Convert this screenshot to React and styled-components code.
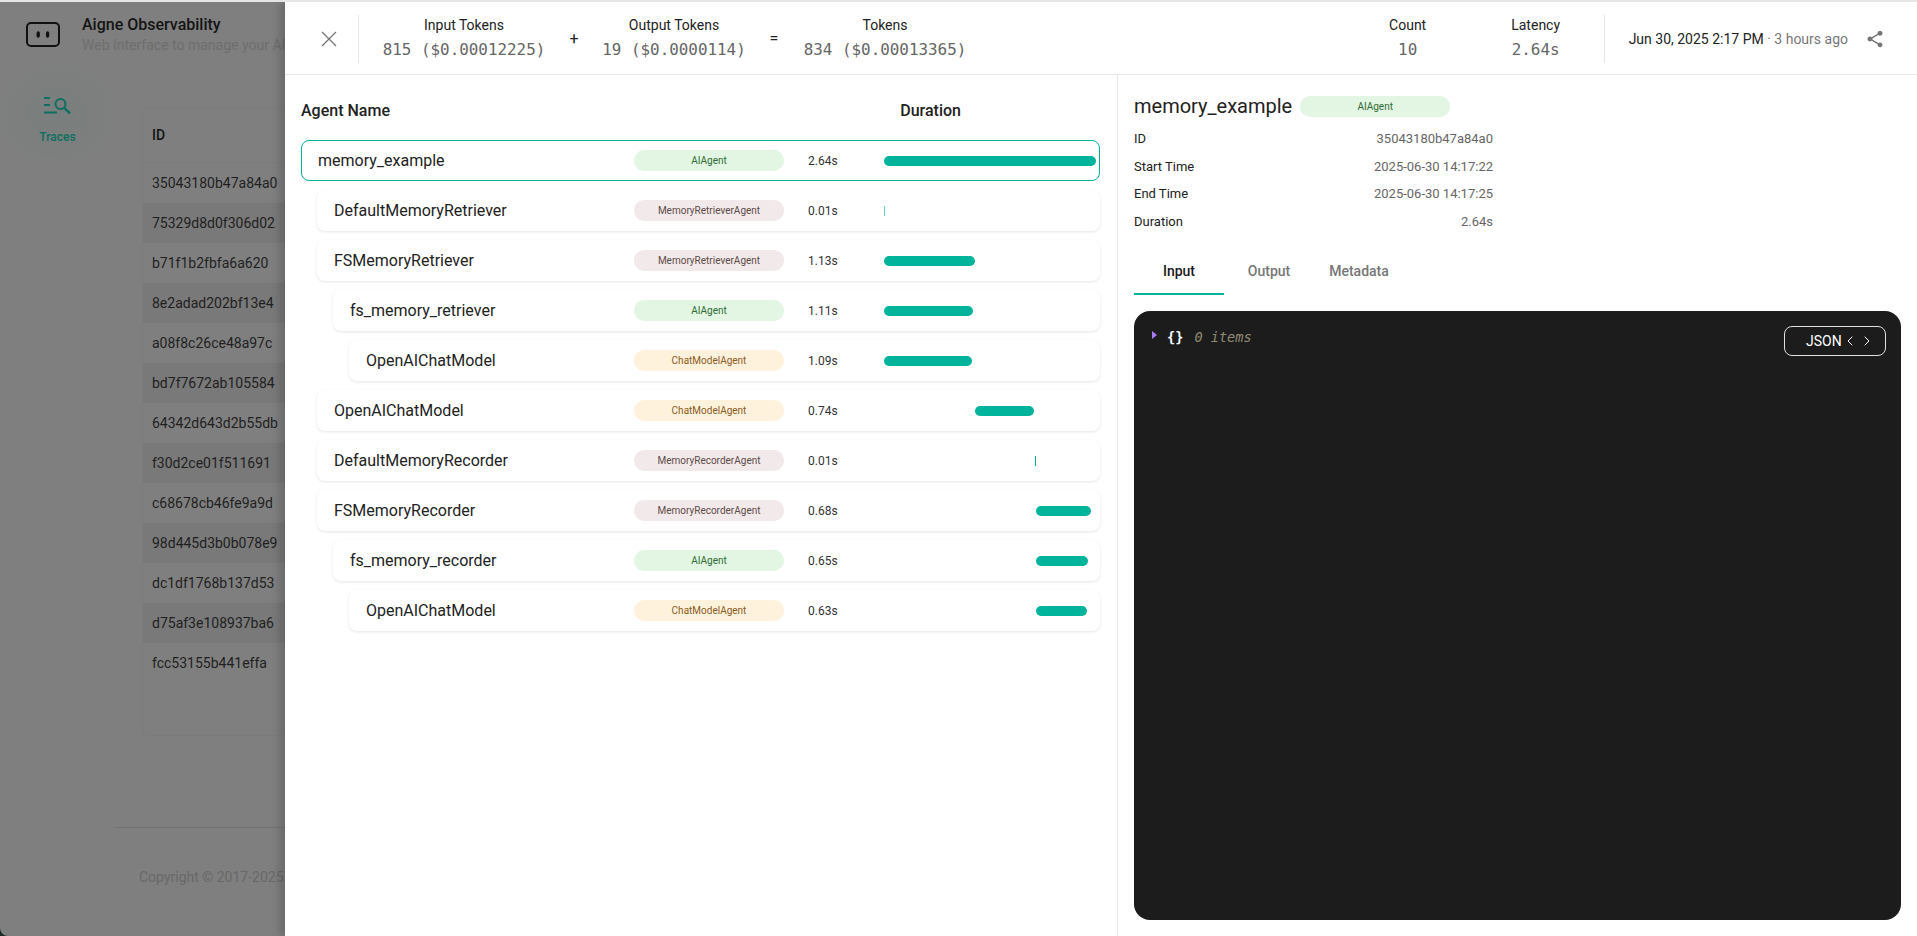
import React from "react";
import styled, { createGlobalStyle } from "styled-components";
import { MdShare } from "react-icons/md";
import { LuChevronLeft, LuChevronRight } from "react-icons/lu";

const GlobalStyle = createGlobalStyle`
  html, body { margin: 0; padding: 0; height: 100%; background: #fff; }
  #root { height: 100%; }
  * { box-sizing: border-box; }
  body { font-family: Roboto, "Liberation Sans", sans-serif; color: #1a1a1a; }
`;

const Page = styled.div`
  width: 1917px;
  height: 936px;
  padding-top: 1px;
  border-top: 2px solid #e6e6e6;
  display: grid;
  grid-template-columns: 285px 1fr;
  overflow: hidden;
  background: linear-gradient(to right, #1c2a28 0 20px, #fff 20px);
`;

/* dimmed page behind the drawer */
const Backdrop = styled.div`
  background: #7f7f7f;
  overflow: hidden;
  display: flex;
  flex-direction: column;
  white-space: nowrap;
  margin-top: -1px;
  border-bottom-left-radius: 8px;
`;

const AppBar = styled.div`
  display: flex;
  align-items: center;
  height: 63px;
  padding: 2px 0 0 26px;
  gap: 22px;
  flex: none;
  & > svg {
    flex: none;
  }
`;

const AppName = styled.div`
  font-size: 16px;
  font-weight: 500;
  line-height: 20px;
  color: #141414;
`;

const AppSub = styled.div`
  font-size: 14px;
  line-height: 20px;
  color: #6e6e6e;
`;

const BackBody = styled.div`
  display: flex;
  flex: 1;
  min-height: 0;
`;

const SideNav = styled.div`
  width: 115px;
  flex: none;
  height: 100px;
  display: flex;
  flex-direction: column;
  align-items: center;
  padding-top: 32px;
  color: #0c6e60;
  font-size: 12px;
  font-weight: 500;
  gap: 16px;
  background: radial-gradient(ellipse at 50% 50%, rgba(0, 120, 100, 0.05), rgba(0, 120, 100, 0) 80%);
`;

const Main = styled.div`
  flex: 1;
  display: flex;
  flex-direction: column;
  min-width: 0;
`;

const TableBox = styled.div`
  margin: 42px 0 0 27px;
  border-left: 1px solid #7c7c7c;
  border-top: 1px solid #7c7c7c;
  border-bottom: 1px solid #7c7c7c;
  border-top-left-radius: 8px;
  border-bottom-left-radius: 8px;
  height: 629px;
  font-size: 14px;
  color: #1f1f1f;
`;

const IdHead = styled.div`
  height: 55px;
  padding: 0 0 0 9px;
  display: flex;
  align-items: center;
  font-weight: 500;
  color: #141414;
  border-bottom: 1px solid #7c7c7c;
`;

const IdRow = styled.div`
  height: 40px;
  padding-left: 9px;
  display: flex;
  align-items: center;
  background: ${({ $alt }) => ($alt ? "#797979" : "transparent")};
`;

const FootLine = styled.div`
  margin-top: 91px;
  border-top: 1px solid #737373;
`;

const Copy = styled.div`
  margin: 41px 0 0 24px;
  font-size: 14px;
  color: #686868;
`;

const Drawer = styled.div`
  display: flex;
  flex-direction: column;
  min-width: 0;
  margin-top: -1px;
  padding-top: 1px;
  box-shadow: -6px 0 8px rgba(0, 0, 0, 0.16);
  position: relative;
  background: #fff;
`;

const Header = styled.div`
  height: 72px;
  flex: none;
  display: flex;
  align-items: center;
  border-bottom: 1px solid #e6e6e6;
  padding: 0 32px 0 28px;
`;

const CloseBtn = styled.div`
  width: 32px;
  display: flex;
  justify-content: center;
  color: #777;
  margin-right: 13px;
`;

const VLine = styled.div`
  width: 1px;
  height: 48px;
  background: #e6e6e6;
  flex: none;
`;

const Stat = styled.div`
  width: ${({ $w }) => $w}px;
  flex: none;
  display: flex;
  flex-direction: column;
  align-items: center;
  white-space: nowrap;
  margin-left: ${({ $ml }) => $ml || 0}px;
  margin-right: ${({ $mr }) => $mr || 0}px;
`;

const StatLabel = styled.div`
  font-size: 14px;
  line-height: 20px;
  color: #222;
`;

const StatValue = styled.div`
  font-family: "DejaVu Sans Mono", "Liberation Mono", monospace;
  font-size: 15.9px;
  line-height: 24px;
  margin-top: 3px;
  color: #666;
`;

const Op = styled.div`
  width: ${({ $w }) => $w}px;
  flex: none;
  text-align: center;
  font-size: 16px;
  color: #222;
`;

const Grow = styled.div`
  flex: 1;
`;

const DateText = styled.div`
  margin-left: 24px;
  font-size: 14px;
  color: #222;
  white-space: nowrap;
  & span {
    color: #777;
  }
`;

const ShareBtn = styled.div`
  margin-left: 17px;
  color: #757575;
  display: flex;
`;

const Body = styled.div`
  flex: 1;
  min-height: 0;
  display: flex;
`;

const TreePane = styled.div`
  width: 833px;
  flex: none;
  border-right: 1px solid #e6e6e6;
  padding: 0 17px 0 16px;
`;

const TreeHead = styled.div`
  height: 65px;
  display: flex;
  align-items: center;
  font-size: 16px;
  font-weight: 500;
  color: #222;
  padding-top: 5px;
`;

const DurationHead = styled.div`
  margin-left: auto;
  margin-right: 139px;
`;

const TreeList = styled.div`
  display: flex;
  flex-direction: column;
  gap: 9px;
`;

const TreeRow = styled.div`
  height: 41px;
  margin-left: ${({ $level }) => $level * 16}px;
  display: grid;
  grid-template-columns: 1fr 150px 100px 212px;
  align-items: center;
  padding: 0 3px 0 16px;
  border-radius: 8px;
  background: #fff;
  border: 1px solid ${({ $active }) => ($active ? "#00b39b" : "transparent")};
  box-shadow: ${({ $active }) =>
    $active ? "none" : "0 1px 3px rgba(0, 0, 0, 0.1)"};
`;

const RowName = styled.div`
  font-size: 16px;
  color: #222;
  white-space: nowrap;
`;

const Badge = styled.div`
  width: 150px;
  height: 21px;
  border-radius: 10px;
  display: flex;
  align-items: center;
  justify-content: center;
  font-size: 10px;
  flex: none;
  background: ${({ $kind }) => KINDS[$kind].bg};
  color: ${({ $kind }) => KINDS[$kind].fg};
`;

const RowTime = styled.div`
  font-size: 12px;
  color: #333;
  padding-left: 24px;
`;

const Track = styled.div`
  height: 10px;
  display: flex;
`;

const Bar = styled.div`
  height: 10px;
  background: #00b39b;
  border-radius: ${({ $thin }) => ($thin ? "0" : "5px")};
  opacity: ${({ $faint }) => ($faint ? 0.6 : 1)};
`;

const DetailPane = styled.div`
  flex: 1;
  min-width: 0;
  display: flex;
  flex-direction: column;
  padding: 0 16px 16px 16px;
`;

const TitleRow = styled.div`
  display: flex;
  align-items: center;
  gap: 8px;
  height: 22px;
  margin-top: 20px;
`;

const Title = styled.div`
  font-size: 20px;
  color: #222;
`;

const Facts = styled.div`
  width: 359px;
  margin-top: 8px;
  display: flex;
  flex-direction: column;
`;

const Fact = styled.div`
  height: 27.5px;
  display: flex;
  align-items: center;
  justify-content: space-between;
  font-size: 13px;
  color: #222;
  & span {
    color: #666;
  }
`;

const Tabs = styled.div`
  display: flex;
  margin-top: 14px;
  height: 46px;
`;

const Tab = styled.div`
  width: 90px;
  display: flex;
  align-items: center;
  justify-content: center;
  font-size: 14px;
  font-weight: 500;
  padding-bottom: 1px;
  color: ${({ $on }) => ($on ? "#1a1a1a" : "#777")};
  border-bottom: 2px solid ${({ $on }) => ($on ? "#00b39b" : "transparent")};
`;

const CodePanel = styled.div`
  flex: 1;
  margin-top: 16px;
  background: #1c1c1c;
  border-radius: 16px;
  display: flex;
  justify-content: space-between;
  align-items: flex-start;
  padding: 15px 15px 0 15px;
`;

const CodeLine = styled.div`
  display: flex;
  align-items: center;
  font-family: "DejaVu Sans Mono", "Liberation Mono", monospace;
  font-size: 13.6px;
  color: #fff;
  padding-top: 3px;
`;

const Caret = styled.div`
  width: 0;
  height: 0;
  border-left: 5px solid #a97bff;
  border-top: 4.5px solid transparent;
  border-bottom: 4.5px solid transparent;
  margin: -5px 10px 0 3px;
`;

const Braces = styled.b`
  margin-right: 11px;
`;

const Muted = styled.span`
  color: #8f8b73;
  font-style: italic;
`;

const JsonBtn = styled.div`
  width: 102px;
  height: 30px;
  border: 1px solid #e0e0e0;
  border-radius: 8px;
  display: flex;
  align-items: center;
  padding-left: 21px;
  font-size: 14px;
  color: #fff;
  & > svg {
    flex: none;
    margin-right: 1px;
  }
`;

const KINDS = {
  ai: { bg: "#e3f6e4", fg: "#2e6b32", label: "AIAgent" },
  ret: { bg: "#f2eaea", fg: "#5d4a48", label: "MemoryRetrieverAgent" },
  rec: { bg: "#f2eaea", fg: "#5d4a48", label: "MemoryRecorderAgent" },
  chat: { bg: "#fff2dc", fg: "#8a5a1c", label: "ChatModelAgent" },
};

const RUNS = [
  { name: "memory_example", kind: "ai", level: 0, time: 2.64, start: 0, active: true },
  { name: "DefaultMemoryRetriever", kind: "ret", level: 1, time: 0.01, start: 0 },
  { name: "FSMemoryRetriever", kind: "ret", level: 1, time: 1.13, start: 0 },
  { name: "fs_memory_retriever", kind: "ai", level: 2, time: 1.11, start: 0 },
  { name: "OpenAIChatModel", kind: "chat", level: 3, time: 1.09, start: 0 },
  { name: "OpenAIChatModel", kind: "chat", level: 1, time: 0.74, start: 1.13 },
  { name: "DefaultMemoryRecorder", kind: "rec", level: 1, time: 0.01, start: 1.88 },
  { name: "FSMemoryRecorder", kind: "rec", level: 1, time: 0.68, start: 1.895 },
  { name: "fs_memory_recorder", kind: "ai", level: 2, time: 0.65, start: 1.895 },
  { name: "OpenAIChatModel", kind: "chat", level: 3, time: 0.63, start: 1.895 },
];

const TRACE_IDS = [
  "35043180b47a84a0",
  "75329d8d0f306d02",
  "b71f1b2fbfa6a620",
  "8e2adad202bf13e4",
  "a08f8c26ce48a97c",
  "bd7f7672ab105584",
  "64342d643d2b55db",
  "f30d2ce01f511691",
  "c68678cb46fe9a9d",
  "98d445d3b0b078e9",
  "dc1df1768b137d53",
  "d75af3e108937ba6",
  "fcc53155b441effa",
];

const PX_PER_SEC = 80.3;

const Logo = () => (
  <svg width="34" height="25" viewBox="0 0 34 25" fill="none">
    <rect x="1" y="1" width="32" height="23" rx="4" stroke="#111" strokeWidth="2" />
    <ellipse cx="12.2" cy="12.5" rx="1.7" ry="3.3" fill="#111" />
    <ellipse cx="21.6" cy="12.5" rx="1.7" ry="3.3" fill="#111" />
  </svg>
);

const TracesIcon = () => (
  <svg width="27" height="17" viewBox="0 0 27 17" fill="none" stroke="#0c6e60" strokeWidth="2">
    <path d="M0 1h6M0 8h6M0 15.5h13" />
    <circle cx="16.5" cy="7" r="5" />
    <path d="M20.2 10.8l5.8 5.6" strokeWidth="2.4" />
  </svg>
);

const CloseIcon = () => (
  <svg width="16" height="16" viewBox="0 0 16 16" stroke="currentColor" strokeWidth="1.3" fill="none">
    <path d="M1 1l14 14M15 1L1 15" />
  </svg>
);

export default function App() {
  return (
    <>
      <GlobalStyle />
      <Page>
        <Backdrop>
          <AppBar>
            <Logo />
            <div>
              <AppName>Aigne Observability</AppName>
              <AppSub>Web Interface to manage your AIGNE agents</AppSub>
            </div>
          </AppBar>
          <BackBody>
            <SideNav>
              <TracesIcon />
              <span>Traces</span>
            </SideNav>
            <Main>
              <TableBox>
                <IdHead>ID</IdHead>
                {TRACE_IDS.map((id, i) => (
                  <IdRow key={id} $alt={i % 2 === 1}>{id}</IdRow>
                ))}
              </TableBox>
              <FootLine />
              <Copy>Copyright © 2017-2025 ArcBlock</Copy>
            </Main>
          </BackBody>
        </Backdrop>
        <Drawer>
          <Header>
            <CloseBtn><CloseIcon /></CloseBtn>
            <VLine />
            <Stat $w={210}>
              <StatLabel>Input Tokens</StatLabel>
              <StatValue>815 ($0.00012225)</StatValue>
            </Stat>
            <Op $w={10}>+</Op>
            <Stat $w={190}>
              <StatLabel>Output Tokens</StatLabel>
              <StatValue>19 ($0.0000114)</StatValue>
            </Stat>
            <Op $w={10}>=</Op>
            <Stat $w={212}>
              <StatLabel>Tokens</StatLabel>
              <StatValue>834 ($0.00013365)</StatValue>
            </Stat>
            <Grow />
            <Stat $w={80}>
              <StatLabel>Count</StatLabel>
              <StatValue>10</StatValue>
            </Stat>
            <Stat $w={80} $ml={48} $mr={28}>
              <StatLabel>Latency</StatLabel>
              <StatValue>2.64s</StatValue>
            </Stat>
            <VLine />
            <DateText>Jun 30, 2025 2:17 PM <span>· 3 hours ago</span></DateText>
            <ShareBtn><MdShare size={20} /></ShareBtn>
          </Header>
          <Body>
            <TreePane>
              <TreeHead>
                Agent Name
                <DurationHead>Duration</DurationHead>
              </TreeHead>
              <TreeList>
                {RUNS.map((r, i) => (
                  <TreeRow key={i} $level={r.level} $active={r.active}>
                    <RowName>{r.name}</RowName>
                    <Badge $kind={r.kind}>{KINDS[r.kind].label}</Badge>
                    <RowTime>{r.time.toFixed(2)}s</RowTime>
                    <Track>
                      <Bar
                        $thin={r.time < 0.02}
                        $faint={r.time < 0.02 && r.start === 0}
                        style={{
                          marginLeft: r.start * PX_PER_SEC,
                          width: Math.max(1, r.time * PX_PER_SEC),
                        }}
                      />
                    </Track>
                  </TreeRow>
                ))}
              </TreeList>
            </TreePane>
            <DetailPane>
              <TitleRow>
                <Title>memory_example</Title>
                <Badge $kind="ai">AIAgent</Badge>
              </TitleRow>
              <Facts>
                <Fact>ID<span>35043180b47a84a0</span></Fact>
                <Fact>Start Time<span>2025-06-30 14:17:22</span></Fact>
                <Fact>End Time<span>2025-06-30 14:17:25</span></Fact>
                <Fact>Duration<span>2.64s</span></Fact>
              </Facts>
              <Tabs>
                <Tab $on>Input</Tab>
                <Tab>Output</Tab>
                <Tab>Metadata</Tab>
              </Tabs>
              <CodePanel>
                <CodeLine>
                  <Caret />
                  <Braces>{"{}"}</Braces>
                  <Muted>0 items</Muted>
                </CodeLine>
                <JsonBtn>
                  JSON
                  <LuChevronLeft size={16} strokeWidth={1.5} />
                  <LuChevronRight size={16} strokeWidth={1.5} />
                </JsonBtn>
              </CodePanel>
            </DetailPane>
          </Body>
        </Drawer>
      </Page>
    </>
  );
}
